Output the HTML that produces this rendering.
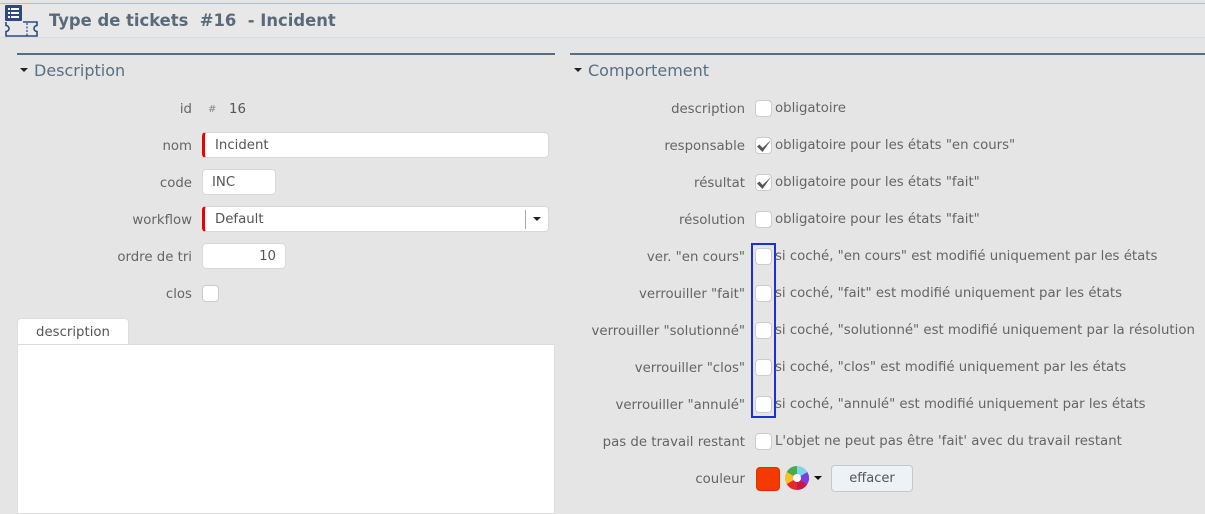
<!DOCTYPE html>
<html><head><meta charset="utf-8"><style>
*{box-sizing:border-box;margin:0;padding:0}
body{width:1205px;height:509px;background:#e5e5e5;font-family:"DejaVu Sans","Liberation Sans",sans-serif;font-size:13.3px;color:#656565;position:relative;overflow:hidden}
.a{position:absolute;white-space:nowrap}
.lbl{position:absolute;text-align:right;white-space:nowrap;line-height:19px}
.in{position:absolute;background:#fff;border:1px solid #d8d8d8;border-radius:4px;padding-left:10px;line-height:25px;color:#555}
.req{border-left:3px solid #e00}
.cb{position:absolute;width:17px;height:17px;background:#fff;border:1px solid #ccc;border-radius:4px}
.hl{position:absolute;height:2px;background:#566e84}
.sec{position:absolute;font-size:16px;color:#5a6f82;font-family:"DejaVu Sans",sans-serif}
.tri{display:inline-block;width:0;height:0;border-left:4px solid transparent;border-right:4px solid transparent;border-top:4px solid #222;vertical-align:middle;margin-right:6px;position:relative;top:-2px}
.t{position:absolute;line-height:19px;white-space:nowrap}
</style></head><body>
<div class="a" style="left:0;top:3px;width:1205px;height:1px;background:#a8c0d4"></div>
<div class="a" style="left:0;top:4px;width:1205px;height:34px;background:#e8e8e8;border-bottom:1px solid #d6dde4"></div>
<svg class="a" style="left:4px;top:5px" width="34" height="32" viewBox="0 0 34 32">
<rect x="1" y="0" width="17" height="16" rx="1" fill="#2c4a80"/>
<rect x="4" y="3" width="2" height="2" fill="#fff"/><rect x="7" y="3" width="8" height="2" fill="#fff"/>
<rect x="4" y="7" width="2" height="2" fill="#fff"/><rect x="7" y="7" width="8" height="2" fill="#fff"/>
<rect x="4" y="11" width="2" height="2" fill="#fff"/><rect x="7" y="11" width="8" height="2" fill="#fff"/>
<path d="M2 17v3.5a3 3 0 0 1 0 6V31h31v-4.5a3 3 0 0 1 0-6V17h-14" fill="none" stroke="#2c4a80" stroke-width="1.6"/>
<path d="M23 18v13" stroke="#2c4a80" stroke-width="1.2" stroke-dasharray="2 1.5"/>
</svg>
<div class="a" style="left:49px;top:11px;font-size:16.4px;font-weight:bold;color:#5a6a7a">Type de tickets&nbsp; #16&nbsp; - Incident</div>

<div class="hl" style="left:17px;top:53px;width:538px"></div>
<div class="hl" style="left:570px;top:53px;width:635px"></div>
<div class="sec" style="left:20px;top:61px"><span class="tri"></span>Description</div>
<div class="sec" style="left:574px;top:61px"><span class="tri"></span>Comportement</div>

<div class="lbl" style="right:1013px;top:100px">id</div>
<div class="t" style="left:208px;top:100px;font-size:10px;color:#888">#</div>
<div class="t" style="left:229px;top:100px;color:#555">16</div>
<div class="lbl" style="right:1013px;top:137px">nom</div>
<div class="in req" style="left:202px;top:132px;width:347px;height:26px">Incident</div>
<div class="lbl" style="right:1013px;top:174px">code</div>
<div class="in" style="left:202px;top:169px;width:74px;height:26px;padding-left:9px">INC</div>
<div class="lbl" style="right:1013px;top:211px">workflow</div>
<div class="in req" style="left:202px;top:206px;width:347px;height:26px">Default
<div class="a" style="right:22px;top:3px;width:1px;height:19px;background:#aaa"></div>
<div class="a" style="right:7px;top:10px;border-left:4px solid transparent;border-right:4px solid transparent;border-top:4px solid #222"></div></div>
<div class="lbl" style="right:1013px;top:248px">ordre de tri</div>
<div class="in" style="left:202px;top:243px;width:84px;height:26px;text-align:right;padding-right:9px">10</div>
<div class="lbl" style="right:1013px;top:285px">clos</div>
<div class="cb" style="left:202px;top:285px"></div>

<div class="a" style="left:17px;top:318px;width:112px;height:27px;background:#fff;border:1px solid #ddd;border-bottom:none;border-radius:4px 4px 0 0;text-align:center;line-height:27px;color:#555">description</div>
<div class="a" style="left:17px;top:344px;width:538px;height:170px;background:#fff;border:1px solid #ddd"></div>

<div class="lbl" style="right:460px;top:100px">description</div>
<div class="lbl" style="right:460px;top:137px">responsable</div>
<div class="lbl" style="right:460px;top:174px">résultat</div>
<div class="lbl" style="right:460px;top:211px">résolution</div>
<div class="lbl" style="right:460px;top:248px">ver. "en cours"</div>
<div class="lbl" style="right:460px;top:285px">verrouiller "fait"</div>
<div class="lbl" style="right:460px;top:322px">verrouiller "solutionné"</div>
<div class="lbl" style="right:460px;top:359px">verrouiller "clos"</div>
<div class="lbl" style="right:460px;top:396px">verrouiller "annulé"</div>
<div class="lbl" style="right:460px;top:433px">pas de travail restant</div>
<div class="lbl" style="right:460px;top:470px">couleur</div>

<div class="cb" style="left:755px;top:100px"></div>
<div class="cb" style="left:755px;top:137px"></div>
<div class="cb" style="left:755px;top:174px"></div>
<div class="cb" style="left:755px;top:211px"></div>
<div class="cb" style="left:755px;top:248px"></div>
<div class="cb" style="left:755px;top:285px"></div>
<div class="cb" style="left:755px;top:322px"></div>
<div class="cb" style="left:755px;top:359px"></div>
<div class="cb" style="left:755px;top:396px"></div>
<div class="cb" style="left:755px;top:433px"></div>
<svg class="a" style="left:755px;top:137px" width="18" height="18"><path d="M2 9.5l2.5-2 3 3.5L16 3 7.5 15z" fill="#555"/></svg>
<svg class="a" style="left:755px;top:174px" width="18" height="18"><path d="M2 9.5l2.5-2 3 3.5L16 3 7.5 15z" fill="#555"/></svg>
<div class="a" style="left:751px;top:243px;width:25px;height:175px;border:2px solid #1e2ed8"></div>

<div class="t" style="left:775px;top:99px">obligatoire</div>
<div class="t" style="left:775px;top:136px">obligatoire pour les états "en cours"</div>
<div class="t" style="left:775px;top:173px">obligatoire pour les états "fait"</div>
<div class="t" style="left:775px;top:210px">obligatoire pour les états "fait"</div>
<div class="t" style="left:775px;top:247px">si coché, "en cours" est modifié uniquement par les états</div>
<div class="t" style="left:775px;top:284px">si coché, "fait" est modifié uniquement par les états</div>
<div class="t" style="left:775px;top:321px">si coché, "solutionné" est modifié uniquement par la résolution</div>
<div class="t" style="left:775px;top:358px">si coché, "clos" est modifié uniquement par les états</div>
<div class="t" style="left:775px;top:395px">si coché, "annulé" est modifié uniquement par les états</div>
<div class="t" style="left:775px;top:432px">L'objet ne peut pas être 'fait' avec du travail restant</div>

<div class="a" style="left:756px;top:467px;width:24px;height:24px;background:#f53a00;border-radius:4px;border:1px solid #e03000"></div>
<svg class="a" style="left:785px;top:466px" width="24" height="24" viewBox="-12 -12 24 24">
<path d="M0 0L0-12A12 12 0 0 1 10.4-6z" fill="#7bd6e8"/>
<path d="M0 0L10.4-6A12 12 0 0 1 10.4 6z" fill="#7a3ee0"/>
<path d="M0 0L10.4 6A12 12 0 0 1 0 12z" fill="#c8174a"/>
<path d="M0 0L0 12A12 12 0 0 1-10.4 6z" fill="#e82828"/>
<path d="M0 0L-10.4 6A12 12 0 0 1-10.4-6z" fill="#f5c02a"/>
<path d="M0 0L-10.4-6A12 12 0 0 1 0-12z" fill="#4caa4c"/>
<circle r="4" fill="#fff"/></svg>
<div class="a" style="left:814px;top:476px;border-left:4px solid transparent;border-right:4px solid transparent;border-top:4px solid #111"></div>
<div class="a" style="left:831px;top:465px;width:82px;height:27px;background:#edf2f7;border:1px solid #c8c8c8;border-radius:4px;text-align:center;line-height:25px;color:#555;font-size:13px">effacer</div>
</body></html>
